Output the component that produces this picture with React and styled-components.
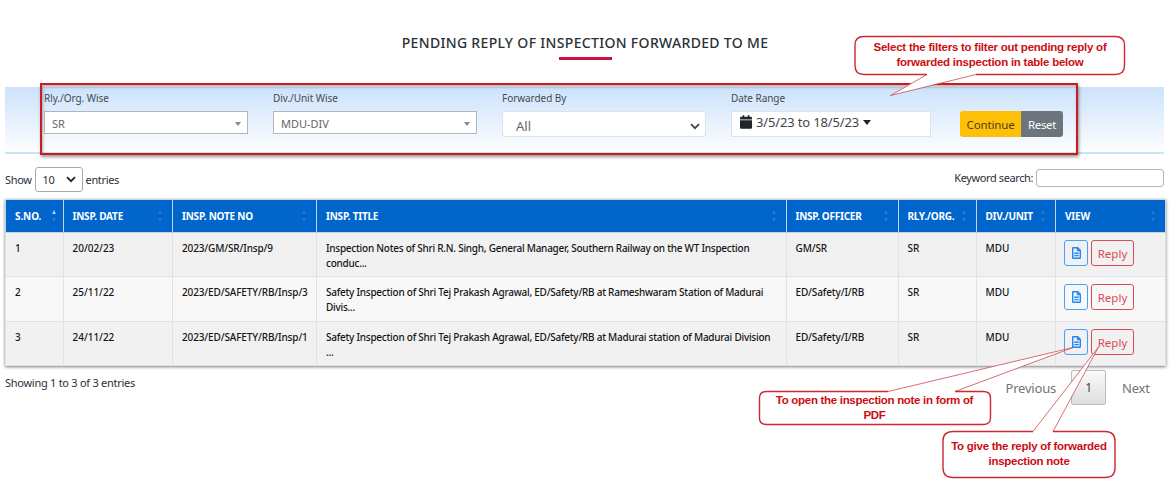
import React from "react";
import styled, { createGlobalStyle } from "styled-components";

const GlobalStyle = createGlobalStyle`
  * { box-sizing: border-box; }
  body {
    margin: 0;
    background: #fff;
    color: #2b3036;
    font-family: "Noto Sans", "Open Sans", sans-serif;
    font-size: 11px;
  }
`;

const Page = styled.main`
  position: relative;
  width: 1176px;
  height: 491px;
  overflow: hidden;
  padding: 31px 11px 0 5px;
`;

const Title = styled.h1`
  margin: 0;
  height: 52px;
  display: flex;
  flex-direction: column;
  align-items: center;
  font-size: 14px;
  font-weight: 500;
  line-height: 24px;
  letter-spacing: 0.32px;
  white-space: nowrap;
  &::after {
    content: "";
    width: 53px;
    height: 3px;
    margin-top: 2px;
    background: #c9123f;
  }
`;

const FilterBar = styled.section`
  height: 71px;
  width: 1159px;
  padding: 0 87px 0 35px;
  background: linear-gradient(#cbe4f5, #cbe4f5) 0 100% / 100% 2px no-repeat,
    linear-gradient(#cce2fc, #fff) 0 100% / 100% 67.5px no-repeat;
`;

const FilterFrame = styled.div`
  display: flex;
  width: 1038px;
  height: 72px;
  padding: 7px 2px 0;
  border: 2px solid #cb1a20;
  box-shadow: 1px 2px 3px rgba(0, 0, 0, 0.4), inset 1px 2px 3px rgba(0, 0, 0, 0.3);
`;

const Field = styled.div`
  width: ${(p) => p.$width || 204}px;
  margin-right: 25px;
  flex: none;
`;

const Label = styled.label`
  display: block;
  height: 19px;
  line-height: 13px;
  font-size: 10px;
  letter-spacing: -0.05px;
  color: #444b52;
  white-space: nowrap;
`;

const Control = styled.div`
  display: flex;
  align-items: center;
  justify-content: space-between;
  height: ${(p) => (p.$tall ? 26 : 23)}px;
  padding: ${(p) => p.$pad || "2px 6px 0 7px"};
  border: 1px solid ${(p) => (p.$tall ? "#dde2e7" : "#b2b5b9")};
  border-radius: ${(p) => p.$radius || 0}px;
  background: #fff;
  font-size: ${(p) => p.$size || 11}px;
  letter-spacing: ${(p) => p.$track || 0}px;
  color: ${(p) => p.$color || "#666"};
  white-space: nowrap;
`;

const Triangle = styled.i`
  width: 0;
  height: 0;
  border: ${(p) => p.$size || 3}px solid transparent;
  border-top: ${(p) => (p.$size || 3) + 1}px solid ${(p) => p.$color || "#888"};
  border-bottom: 0;
`;

const DateValue = styled.span`
  display: flex;
  align-items: center;
  gap: 4px;
`;

const ButtonGroup = styled.div`
  display: flex;
  height: 26px;
  margin: 19px 0 0 4px;
`;

const Button = styled.button`
  width: ${(p) => p.$width}px;
  padding: 1px 0 0;
  border: 0;
  border-radius: ${(p) => p.$radius};
  background: ${(p) => p.$bg};
  color: ${(p) => p.$color};
  font: 11.5px "Noto Sans", sans-serif;
  letter-spacing: ${(p) => p.$track}px;
`;

const Toolbar = styled.div`
  display: flex;
  justify-content: space-between;
  width: 1159px;
  height: 45px;
  padding-top: 13px;
`;

const LengthControl = styled.div`
  display: flex;
  align-items: center;
  height: 25px;
  gap: 3px;
  letter-spacing: -0.35px;
`;

const LengthSelect = styled.span`
  display: flex;
  align-items: center;
  justify-content: space-between;
  width: 48px;
  height: 25px;
  padding: 0 6px 0 7px;
  border: 1px solid #aaa;
  border-radius: 3px;
`;

const Search = styled.label`
  display: flex;
  align-items: center;
  height: 21px;
  gap: 3px;
  letter-spacing: -0.4px;
`;

const SearchInput = styled.input`
  width: 128px;
  height: 18px;
  border: 1px solid #b5b5b5;
  border-radius: 3px;
`;

const Table = styled.table`
  width: 1160px;
  table-layout: fixed;
  border-collapse: collapse;
  box-shadow: 0 1px 3px rgba(0, 0, 0, 0.5);
`;

const HeadCell = styled.th`
  height: 33px;
  padding: 0 5px 0 9px;
  border: 1px solid #c3d5e8;
  background: #0066cc;
  color: #fff;
  font-size: 10px;
  font-weight: 700;
  letter-spacing: ${(p) => p.$track}px;
  text-align: left;
  white-space: nowrap;
`;

const HeadInner = styled.div`
  display: flex;
  align-items: center;
  justify-content: space-between;
`;

const Sort = styled.span`
  display: flex;
  flex-direction: column;
  gap: 4px;
  margin-right: ${(p) => p.$right || 0}px;
  &::before, &::after {
    content: "";
    border: 2.5px solid transparent;
  }
  &::before {
    border-top: 0;
    border-bottom: 4px solid ${(p) => (p.$active ? "#a9c9ee" : "#2477d3")};
  }
  &::after {
    border-bottom: 0;
    border-top: 4px solid #2477d3;
  }
`;

const Row = styled.tr`
  height: ${(p) => p.$height}px;
  background: ${(p) => (p.$light ? "#f8f8f8" : "#f1f1f1")};
`;

const Cell = styled.td`
  padding: ${(p) => (p.$actions ? "7px 0 0 8px" : "8px 0 0 9px")};
  border: 1px solid #dee2e6;
  vertical-align: top;
  font-size: 10px;
  font-weight: 500;
  line-height: 15px;
  letter-spacing: ${(p) => p.$track}px;
  color: #151515;
  white-space: nowrap;
`;

const Actions = styled.div`
  display: flex;
  gap: 3px;
`;

const ActionButton = styled.button`
  display: flex;
  align-items: center;
  justify-content: center;
  width: ${(p) => (p.$reply ? 43 : 24)}px;
  height: 26px;
  padding: 0;
  border: 1px solid ${(p) => (p.$reply ? "#dc4a58" : "#4a9ffb")};
  border-radius: 3px;
  background: transparent;
  color: ${(p) => (p.$reply ? "#dc4a58" : "#1c86fa")};
  font: 11.5px "Noto Sans", sans-serif;
`;

const Footer = styled.footer`
  display: flex;
  justify-content: space-between;
  width: 1159px;
  padding-top: 4px;
`;

const Info = styled.div`
  padding-top: 5px;
  letter-spacing: -0.27px;
`;

const Pager = styled.nav`
  display: flex;
  align-items: center;
  height: 35px;
  font-size: 13px;
  line-height: 16px;
  letter-spacing: -0.2px;
  color: #747474;
`;

const PageNumber = styled.span`
  display: flex;
  align-items: center;
  justify-content: center;
  width: 35px;
  height: 35px;
  margin: 0 16px 0 15px;
  border: 1px solid #bdbdbd;
  border-radius: 2px;
  background: linear-gradient(#fafafa, #dedede);
  color: #444;
  font-size: 12px;
`;

const NextLink = styled.span`
  width: 42px;
`;

const Shapes = styled.svg`
  position: absolute;
  inset: 0;
  pointer-events: none;
`;

const Note = styled.div`
  position: absolute;
  left: ${(p) => p.$x}px;
  top: ${(p) => p.$y}px;
  width: ${(p) => p.$w}px;
  text-align: center;
  white-space: nowrap;
  font: bold 11.5px/15px "Liberation Sans", Arial, sans-serif;
  letter-spacing: ${(p) => p.$track}px;
  color: #cc0d12;
`;

const Chevron = ({ color = "#222" }) => (
  <svg width="10" height="7" viewBox="0 0 10 7" fill="none" stroke={color} strokeWidth="1.8">
    <path d="M1 1.2 5 5.2 9 1.2" />
  </svg>
);

const Calendar = () => (
  <svg width="12" height="14" viewBox="0 0 448 512" fill="#212529">
    <path d="M12 192h424c6.600 0 12 5.400 12 12v260c0 26.500-21.500 48-48 48H48c-26.500 0-48-21.500-48-48V204c0-6.600 5.400-12 12-12zm436-44v-36c0-26.500-21.500-48-48-48h-48V12c0-6.600-5.400-12-12-12h-40c-6.600 0-12 5.400-12 12v52H160V12c0-6.600-5.400-12-12-12h-40c-6.600 0-12 5.400-12 12v52H48C21.500 64 0 85.500 0 112v36c0 6.600 5.400 12 12 12h424c6.600 0 12-5.400 12-12z" />
  </svg>
);

const FileIcon = () => (
  <svg width="9" height="12" viewBox="0 0 9 12" fill="none" stroke="currentColor" strokeWidth="1.4">
    <path d="M.7 1.200Q.7.7 1.200.7H5.700L8.300 3.300V10.800Q8.300 11.300 7.800 11.300H1.200Q.7 11.300.7 10.800ZM5.500.8V3.500H8.200M2.300 6.200H6.700M2.300 8.600H6.700" />
  </svg>
);

const columns = [
  { name: "S.NO.", width: 57.5, track: -0.1, active: true, right: 2 },
  { name: "INSP. DATE", width: 109.500, track: -0.2, right: 5 },
  { name: "INSP. NOTE NO", width: 144, track: -0.2, right: 5 },
  { name: "INSP. TITLE", width: 469.500, track: -0.2, right: 5 },
  { name: "INSP. OFFICER", width: 112, track: -0.25, right: 5 },
  { name: "RLY./ORG.", width: 78, track: -0.25, right: 5 },
  { name: "DIV./UNIT", width: 79.500, track: -0.25, right: 5 },
  { name: "VIEW", width: 110, track: -0.2, right: 5 },
];

const rows = [
  ["1", "20/02/23", "2023/GM/SR/Insp/9", ["Inspection Notes of Shri R.N. Singh, General Manager, Southern Railway on the WT Inspection", "conduc..."], "GM/SR"],
  ["2", "25/11/22", "2023/ED/SAFETY/RB/Insp/3", ["Safety Inspection of Shri Tej Prakash Agrawal, ED/Safety/RB at Rameshwaram Station of Madurai", "Divis..."], "ED/Safety/I/RB"],
  ["3", "24/11/22", "2023/ED/SAFETY/RB/Insp/1", ["Safety Inspection of Shri Tej Prakash Agrawal, ED/Safety/RB at Madurai station of Madurai Division", "..."], "ED/Safety/I/RB"],
];

export default function App() {
  return (
    <Page>
      <GlobalStyle />
      <Title>PENDING REPLY OF INSPECTION FORWARDED TO ME</Title>
      <FilterBar>
        <FilterFrame>
          <Field>
            <Label>Rly./Org. Wise</Label>
            <Control>SR<Triangle /></Control>
          </Field>
          <Field>
            <Label>Div./Unit Wise</Label>
            <Control>MDU-DIV<Triangle /></Control>
          </Field>
          <Field>
            <Label>Forwarded By</Label>
            <Control $tall $radius={3} $size={13} $pad="4px 5px 0 13px">All<Chevron color="#444" /></Control>
          </Field>
          <Field $width={200}>
            <Label>Date Range</Label>
            <Control $tall $size={13} $pad="0 8px 4px" $color="#444" $track={-0.15}>
              <DateValue><Calendar />3/5/23 to 18/5/23<Triangle $size={4} $color="#212529" /></DateValue>
            </Control>
          </Field>
          <ButtonGroup>
            <Button $width={61} $radius="3px 0 0 3px" $bg="#ffc107" $color="#4a3f20" $track={-0.15}>Continue</Button>
            <Button $width={42} $radius="0 3px 3px 0" $bg="#6c757d" $color="#fff" $track={-0.4}>Reset</Button>
          </ButtonGroup>
        </FilterFrame>
      </FilterBar>
      <Toolbar>
        <LengthControl>Show<LengthSelect>10<Chevron /></LengthSelect>entries</LengthControl>
        <Search>Keyword search:<SearchInput /></Search>
      </Toolbar>
      <Table>
        <colgroup>{columns.map((c) => <col key={c.name} width={c.width} />)}</colgroup>
        <thead>
          <tr>
            {columns.map((c) => (
              <HeadCell key={c.name} $track={c.track}>
                <HeadInner>{c.name}<Sort $active={c.active} $right={c.right} /></HeadInner>
              </HeadCell>
            ))}
          </tr>
        </thead>
        <tbody>
          {rows.map(([no, date, note, title, officer], i) => (
            <Row key={no} $light={i === 1} $height={i === 1 ? 45 : 44}>
              <Cell>{no}</Cell>
              <Cell $track={-0.03}>{date}</Cell>
              <Cell $track={-0.13}>{note}</Cell>
              <Cell $track={-0.25}>{title[0]}<br />{title[1]}</Cell>
              <Cell $track={-0.13}>{officer}</Cell>
              <Cell>SR</Cell>
              <Cell>MDU</Cell>
              <Cell $actions>
                <Actions>
                  <ActionButton><FileIcon /></ActionButton>
                  <ActionButton $reply>Reply</ActionButton>
                </Actions>
              </Cell>
            </Row>
          ))}
        </tbody>
      </Table>
      <Footer>
        <Info>Showing 1 to 3 of 3 entries</Info>
        <Pager>Previous<PageNumber>1</PageNumber><NextLink>Next</NextLink></Pager>
      </Footer>
      <Shapes width="1176" height="491" viewBox="0 0 1176 491">
        <path d="M927 74 890.500 95.500 976 74Z" fill="#fff" />
        <path d="M888 391.500 1073 347.500 955 391.500Z" fill="#fff" />
        <path d="M1033 431.500 1098.500 347 1053 431.500Z" fill="#fff" />
        <g fill="none" stroke="#c94b50" strokeWidth="0.8">
          <path d="M927 74.500 890.500 95.500 976 74.500" />
          <path d="M888 391.500 1073 347.500 955 391.500" />
          <path d="M1033 431.500 1098.500 347 1053 431.500" />
        </g>
        <g fill="none" stroke="#cc2a30" strokeWidth="1.4">
          <path d="M927 74.500H864Q855 74.500 855 65.500V45Q855 36.500 864 36.500H1115Q1124.500 36.500 1124.500 45V65.500Q1124.500 74.500 1115 74.500H976" />
          <path d="M888 391.500H767Q759.500 391.500 759.500 398V418Q759.500 424.500 767 424.500H983Q990.500 424.500 990.500 418V398Q990.500 391.500 983 391.500H955" />
          <path d="M1033 431.500H953Q943 431.500 943 441V468Q943 477.500 953 477.500H1105Q1115 477.500 1115 468V441Q1115 431.500 1105 431.500H1053" />
        </g>
      </Shapes>
      <Note $x={855} $y={40} $w={270} $track={-0.24}>Select the filters to filter out pending reply of<br />forwarded inspection in table below</Note>
      <Note $x={759} $y={393} $w={231} $track={-0.3}>To open the inspection note in form of<br />PDF</Note>
      <Note $x={943} $y={439} $w={172} $track={-0.26}>To give the reply of forwarded<br />inspection note</Note>
    </Page>
  );
}
